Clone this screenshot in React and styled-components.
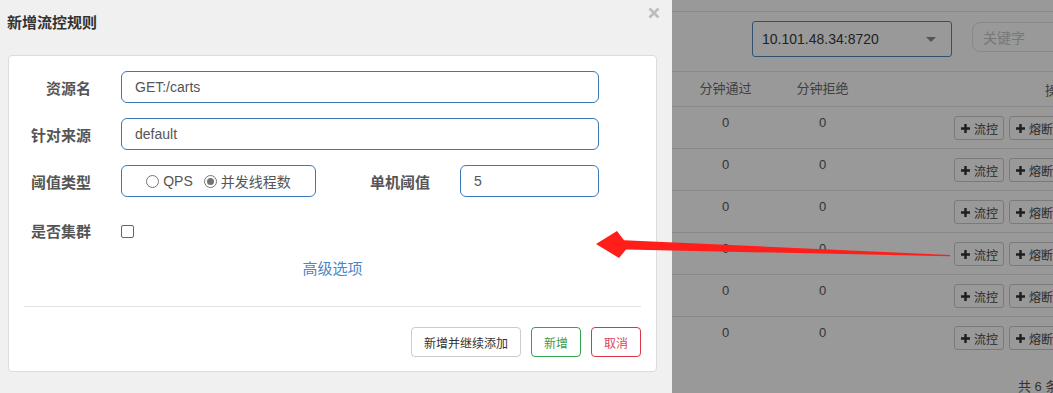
import React from "react";
import styled, { createGlobalStyle } from "styled-components";

const GlobalStyles = createGlobalStyle`
  body {
    margin: 0;
    font-family: "Liberation Sans", "Noto Sans CJK SC", sans-serif;
    background: #999;
  }
  * { box-sizing: border-box; }
`;

const rows = [0, 1, 2, 3, 4, 5];

const App = () => {
  return (
    <>
      <GlobalStyles />
      <Page>
        <Dialog>
          <Header>
            <Title>新增流控规则</Title>
            <CloseButton>
              <svg width="12" height="12" viewBox="0 0 12 12">
                <path d="M1.5 1.5 L10.5 10.5 M10.5 1.5 L1.5 10.5" stroke="#bdbdbd" strokeWidth="2.6" />
              </svg>
            </CloseButton>
          </Header>
          <Card>
            <FormRow>
              <Label>资源名</Label>
              <TextInput>GET:/carts</TextInput>
            </FormRow>
            <FormRow>
              <Label>针对来源</Label>
              <TextInput>default</TextInput>
            </FormRow>
            <FormRow>
              <Label>阈值类型</Label>
              <RadioGroup>
                <RadioItem>
                  <Radio />
                  QPS
                </RadioItem>
                <RadioItem>
                  <Radio checked />
                  并发线程数
                </RadioItem>
              </RadioGroup>
              <Label wide>单机阈值</Label>
              <TextInput>5</TextInput>
            </FormRow>
            <FormRow tall>
              <Label>是否集群</Label>
              <Checkbox />
            </FormRow>
            <AdvancedLink>高级选项</AdvancedLink>
            <Divider />
            <Actions>
              <ActionButton>新增并继续添加</ActionButton>
              <ActionButton variant="success">新增</ActionButton>
              <ActionButton variant="danger">取消</ActionButton>
            </Actions>
          </Card>
        </Dialog>

        <Backdrop>
          <TopBar />
          <Toolbar>
            <Select>
              10.101.48.34:8720
              <Caret />
            </Select>
            <Search>关键字</Search>
          </Toolbar>
          <HeadRow>
            <Spacer />
            <Cell>分钟通过</Cell>
            <Cell>分钟拒绝</Cell>
            <OpHead>操</OpHead>
          </HeadRow>
          {rows.map((r) => (
            <BodyRow key={r} last={r === rows.length - 1}>
              <Spacer />
              <Cell>0</Cell>
              <Cell>0</Cell>
              <OpCell>
                <RowButton>
                  <PlusIcon />
                  流控
                </RowButton>
                <RowButton>
                  <PlusIcon />
                  熔断
                </RowButton>
              </OpCell>
            </BodyRow>
          ))}
          <Footer>共 6 条</Footer>
        </Backdrop>

        <Arrow width="365" height="36" viewBox="0 0 365 36">
          <polygon
            points="6,19 27,6 34,15.3 360,30 360,31.2 36,24.6 29,33"
            fill="#ff1e1a"
          />
        </Arrow>
      </Page>
    </>
  );
};

const PlusIcon = () => (
  <svg width="9" height="9" viewBox="0 0 9 9">
    <path d="M4.5 0 V9 M0 4.5 H9" stroke="#1e1e1e" strokeWidth="2.4" />
  </svg>
);

export default App;

const Page = styled.div`
  position: relative;
  display: flex;
  width: 1053px;
  height: 393px;
  overflow: hidden;
`;

const Dialog = styled.div`
  width: 672px;
  flex-shrink: 0;
  background: #f0f0f0;
`;

const Header = styled.div`
  display: flex;
  justify-content: space-between;
  align-items: flex-start;
  height: 55px;
  padding: 13px 12px 0 7px;
`;

const Title = styled.div`
  font-size: 15px;
  line-height: 20px;
  font-weight: bold;
  color: #333;
`;

const CloseButton = styled.div`
  width: 12px;
  height: 12px;
  margin-top: -6px;
  display: flex;
`;

const Card = styled.div`
  margin: 0 15px 0 8px;
  background: #fff;
  border: 1px solid #dcdcdc;
  border-radius: 4px;
  padding: 15px 15px 14px;
`;

const FormRow = styled.div`
  display: flex;
  align-items: center;
  height: ${({ tall }) => (tall ? "36px" : "32px")};
  margin-bottom: ${({ tall }) => (tall ? "0" : "15px")};
  padding-right: 42px;
`;

const Label = styled.div`
  width: ${({ wide }) => (wide ? "114px" : "67px")};
  flex-shrink: 0;
  margin-right: 30px;
  text-align: right;
  font-size: 15px;
  font-weight: bold;
  color: #555;
`;

const TextInput = styled.div`
  flex: 1;
  height: 32px;
  display: flex;
  align-items: center;
  padding-left: 13px;
  border: 1px solid #3a78b8;
  border-radius: 6px;
  font-size: 14px;
  color: #555;
`;

const RadioGroup = styled.div`
  width: 195px;
  flex-shrink: 0;
  height: 32px;
  display: flex;
  align-items: center;
  justify-content: center;
  gap: 11px;
  border: 1px solid #3a78b8;
  border-radius: 6px;
  font-size: 14px;
  color: #555;
`;

const RadioItem = styled.label`
  display: flex;
  align-items: center;
  gap: 4px;
`;

const Radio = styled.span`
  width: 13px;
  height: 13px;
  border-radius: 50%;
  border: 1px solid #767676;
  display: flex;
  align-items: center;
  justify-content: center;
  &::after {
    content: "";
    width: 7px;
    height: 7px;
    border-radius: 50%;
    background: ${({ checked }) => (checked ? "#737373" : "transparent")};
  }
`;

const Checkbox = styled.span`
  width: 13px;
  height: 13px;
  margin: 2px 0 0 0;
  border: 1px solid #666;
  border-radius: 2px;
`;

const AdvancedLink = styled.div`
  margin-top: 11px;
  text-align: center;
  font-size: 15px;
  line-height: 20px;
  color: #4a86c5;
`;

const Divider = styled.div`
  height: 1px;
  background: #e3e3e3;
  margin-top: 27px;
`;

const Actions = styled.div`
  display: flex;
  justify-content: flex-end;
  gap: 10px;
  margin-top: 20px;
`;

const ActionButton = styled.div`
  height: 30px;
  display: flex;
  align-items: center;
  padding: 0 12px;
  border-radius: 4px;
  font-size: 12px;
  background: #fff;
  border: 1px solid
    ${({ variant }) =>
      variant === "success" ? "#2ea44f" : variant === "danger" ? "#dc3545" : "#cccccc"};
  color: ${({ variant }) =>
    variant === "success" ? "#3f9a4a" : variant === "danger" ? "#d9455a" : "#333"};
`;

const Backdrop = styled.div`
  flex: 1;
  background: #999;
  color: #333;
`;

const TopBar = styled.div`
  height: 12px;
  border-bottom: 1px solid #8a8a8a;
`;

const Toolbar = styled.div`
  display: flex;
  align-items: flex-start;
  height: 60px;
  padding: 9px 0 0 80px;
  border-bottom: 1px solid #8a8a8a;
`;

const Select = styled.div`
  width: 200px;
  height: 36px;
  flex-shrink: 0;
  display: flex;
  align-items: center;
  justify-content: space-between;
  padding: 0 15px 0 9px;
  border: 1px solid #33506e;
  border-radius: 3px;
  font-size: 14px;
  color: #222;
`;

const Caret = styled.span`
  width: 0;
  height: 0;
  border-left: 5px solid transparent;
  border-right: 5px solid transparent;
  border-top: 5px solid #555;
`;

const Search = styled.div`
  width: 120px;
  height: 30px;
  flex-shrink: 0;
  margin: 1px 0 0 20px;
  display: flex;
  align-items: center;
  padding-left: 10px;
  border: 1px solid #888;
  border-radius: 8px;
  font-size: 14px;
  color: #777;
`;

const HeadRow = styled.div`
  display: flex;
  align-items: center;
  height: 35px;
  border-bottom: 1px solid #8a8a8a;
  font-size: 13px;
  color: #404040;
`;

const BodyRow = styled.div`
  display: flex;
  align-items: flex-start;
  height: 42px;
  border-bottom: 1px solid ${({ last }) => (last ? "transparent" : "#888")};
  font-size: 13px;
  color: #333;
`;

const Spacer = styled.div`
  width: 5px;
  flex-shrink: 0;
`;

const Cell = styled.div`
  width: 97px;
  flex-shrink: 0;
  text-align: center;
  padding-top: 7px;
  line-height: 18px;
  ${HeadRow} & {
    padding-top: 0;
  }
`;

const OpHead = styled.div`
  padding-left: 174px;
  white-space: nowrap;
`;

const OpCell = styled.div`
  display: flex;
  gap: 5px;
  padding: 9px 0 0 83px;
  white-space: nowrap;
`;

const RowButton = styled.div`
  height: 24px;
  display: flex;
  align-items: center;
  gap: 4px;
  padding: 0 5px 0 6px;
  border: 1px solid #7a7a7a;
  border-radius: 3px;
  font-size: 12px;
  color: #2a2a2a;
  flex-shrink: 0;
`;

const Footer = styled.div`
  padding: 20px 0 0 346px;
  font-size: 13px;
  line-height: 16px;
  white-space: nowrap;
`;

const Arrow = styled.svg`
  position: absolute;
  left: 590px;
  top: 225px;
  pointer-events: none;
`;
